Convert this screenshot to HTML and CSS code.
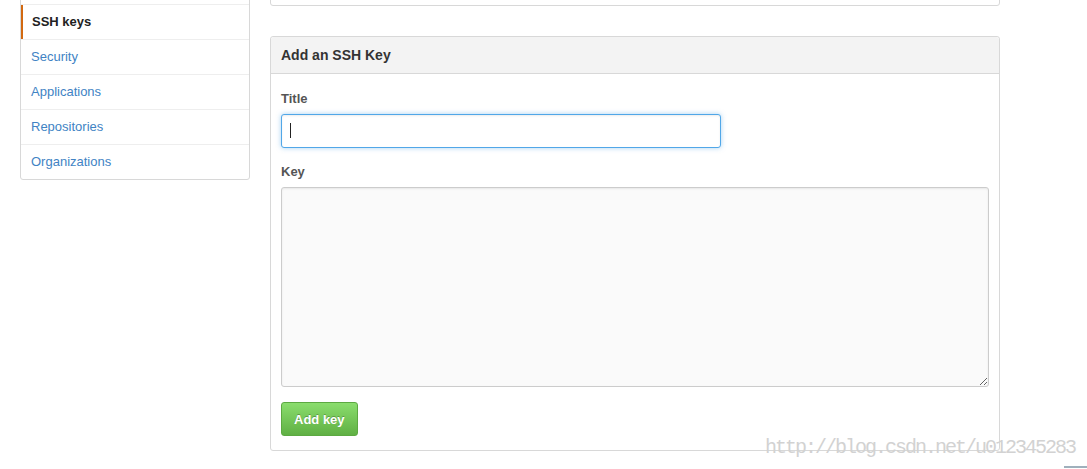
FILE: index.html
```html
<!DOCTYPE html>
<html>
<head>
<meta name="viewport" content="width=device-width, initial-scale=1">
<link rel="stylesheet" href="styles.css">
</head>
<body>

<div class="page">
  <ul class="menu">
    <li class="menuSpacer"></li>
    <li class="menuItem selected"><a href="#">SSH keys</a></li>
    <li class="menuItem"><a href="#">Security</a></li>
    <li class="menuItem"><a href="#">Applications</a></li>
    <li class="menuItem"><a href="#">Repositories</a></li>
    <li class="menuItem"><a href="#">Organizations</a></li>
  </ul>

  <div class="content">
    <div class="box topBox"></div>

    <div class="box">
      <div class="boxHeader">Add an SSH Key</div>
      <div class="boxBody">
        <label class="fieldLabel" for="keyTitle">Title</label>
        <div class="fieldWrap">
          <input type="text" id="keyTitle" class="textField focused">
          <span class="caret"></span>
        </div>
        <label class="fieldLabel" for="keyValue">Key</label>
        <textarea id="keyValue" class="keyArea"></textarea>
        <button class="button primary">Add key</button>
      </div>
    </div>
  </div>
</div>

<div class="watermark">http://blog.csdn.net/u012345283</div>
<div class="cornerMark"></div>

</body>
</html>
```

FILE: styles.css
```css
body {
  margin: 0;
  font-family: "Liberation Sans", Arial, sans-serif;
  font-size: 13px;
  color: #333;
  background: #fff;
}

.page {
  display: flex;
  align-items: flex-start;
  gap: 20px;
  margin-top: -10px;
  padding-left: 20px;
}

/* left menu */
.menu {
  width: 228px;
  margin: 0;
  padding: 0;
  list-style: none;
  border: 1px solid #d8d8d8;
  border-radius: 3px;
}

.menuSpacer {
  height: 13px;
}

.menuItem {
  border-top: 1px solid #eee;
}

.menuItem a {
  display: block;
  padding: 8px 10px;
  line-height: 18px;
  color: #4183c4;
  text-decoration: none;
}

.menuItem.selected a {
  padding-left: 9px;
  border-left: 2px solid #d26911;
  color: #222;
  font-weight: bold;
}

/* right column */
.content {
  width: 730px;
}

.box {
  border: 1px solid #d8d8d8;
  border-radius: 3px;
  margin-bottom: 30px;
}

.topBox {
  height: 14px;
}

.boxHeader {
  padding: 9px 10px;
  line-height: 18px;
  font-size: 14px;
  font-weight: bold;
  color: #333;
  background: #f3f3f3;
  border-bottom: 1px solid #d8d8d8;
  border-radius: 3px 3px 0 0;
}

.boxBody {
  padding: 16px 10px 14px;
}

.fieldLabel {
  display: block;
  line-height: 18px;
  margin-bottom: 6px;
  font-weight: bold;
  color: #555;
}

.fieldWrap {
  position: relative;
  width: 440px;
  margin-bottom: 15px;
}

.textField {
  display: block;
  box-sizing: border-box;
  width: 440px;
  height: 34px;
  margin: 0;
  padding: 7px 8px;
  font-family: inherit;
  font-size: 13px;
  border: 1px solid #ccc;
  border-radius: 3px;
  outline: none;
  box-shadow: inset 0 1px 2px rgba(0, 0, 0, 0.075);
}

.textField.focused,
.textField:focus {
  border-color: #51a7e8;
  box-shadow: inset 0 1px 2px rgba(0, 0, 0, 0.075), 0 0 5px rgba(81, 167, 232, 0.5);
}

.caret {
  position: absolute;
  left: 9px;
  top: 9px;
  width: 1px;
  height: 15px;
  background: #222;
}

.keyArea {
  display: block;
  box-sizing: border-box;
  width: 100%;
  height: 200px;
  margin: 0 0 15px;
  padding: 7px 8px;
  font-family: "Liberation Mono", monospace;
  font-size: 12px;
  background: #fafafa;
  border: 1px solid #ccc;
  border-radius: 3px;
  box-shadow: inset 0 1px 2px rgba(0, 0, 0, 0.075);
  outline: none;
}

.button {
  display: block;
  height: 34px;
  padding: 0 12px;
  font-family: inherit;
  font-size: 13px;
  font-weight: bold;
  border-radius: 3px;
  cursor: pointer;
}

.button.primary {
  color: #fff;
  text-shadow: 0 -1px 0 rgba(0, 0, 0, 0.25);
  background: linear-gradient(#8add6d, #60b044);
  border: 1px solid #5ca941;
}

/* overlays */
.watermark {
  position: absolute;
  left: 765px;
  top: 436px;
  font-family: "Liberation Mono", monospace;
  font-size: 20px;
  letter-spacing: -2px;
  line-height: 24px;
  color: #d2d2d2;
  white-space: nowrap;
}

.cornerMark {
  position: absolute;
  left: 1064px;
  top: 466px;
  width: 23px;
  height: 2px;
  background: #9fb0bc;
}
```
